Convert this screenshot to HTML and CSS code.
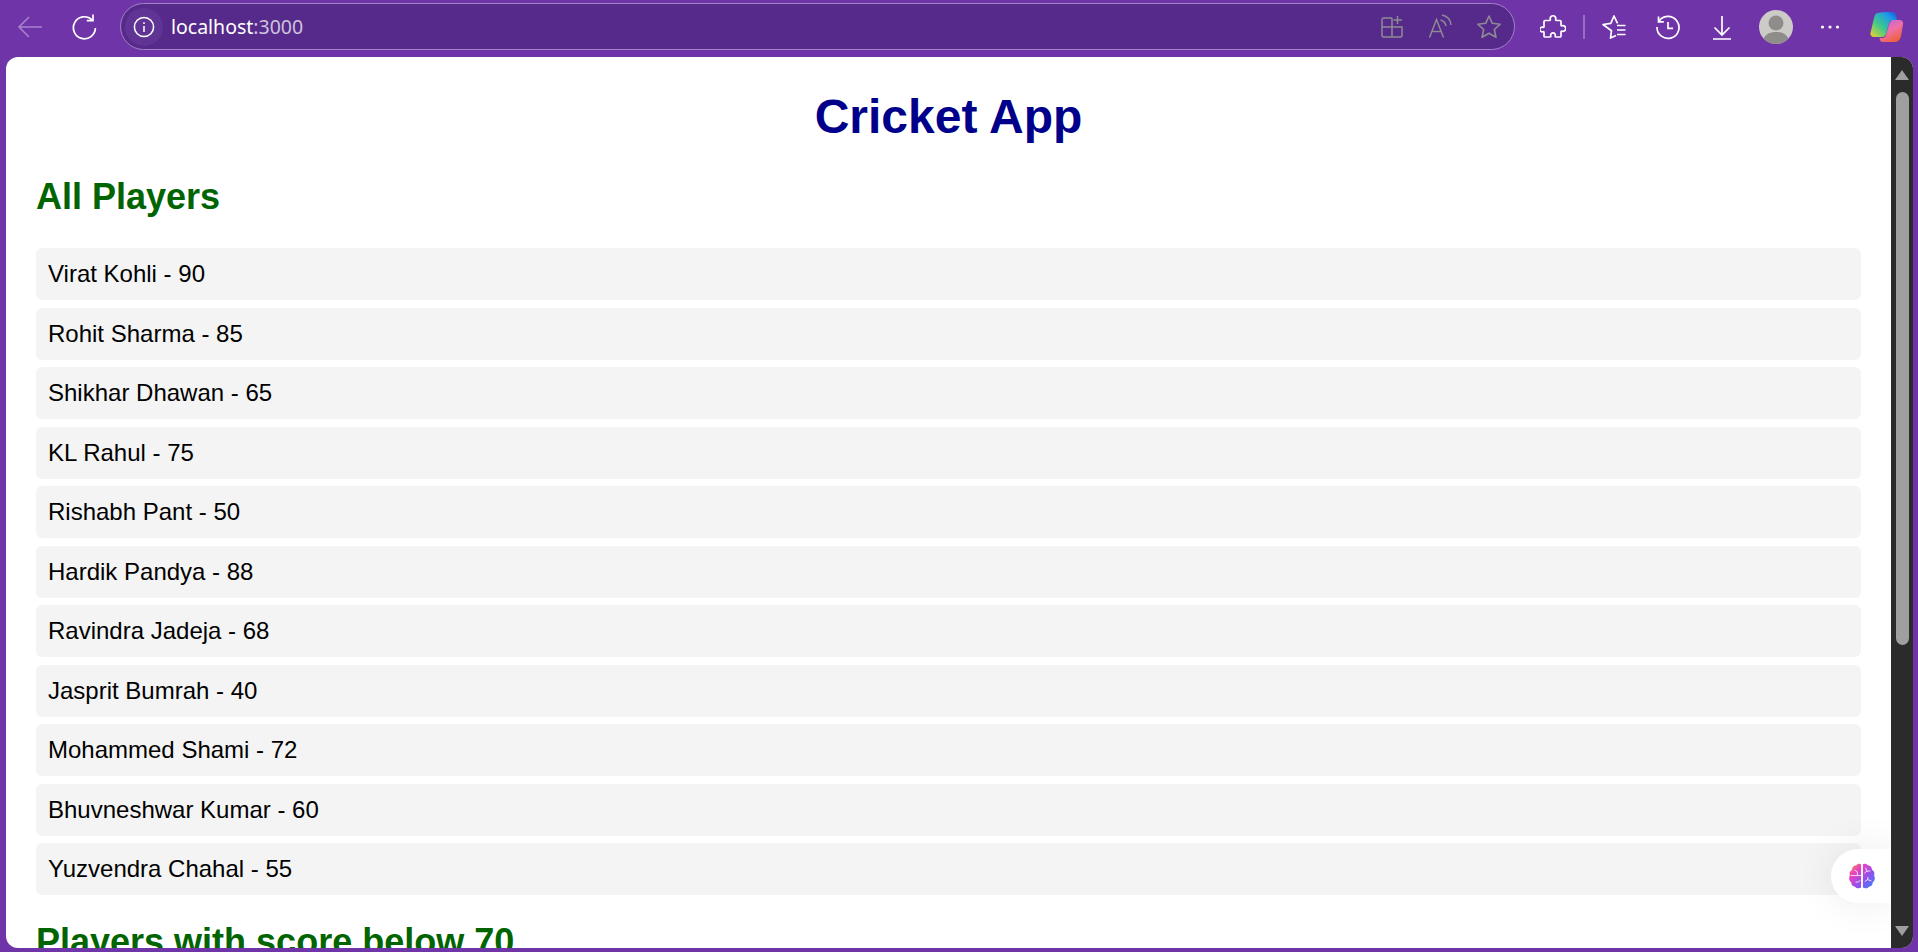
FILE: index.html
```html
<!DOCTYPE html>
<html lang="en">
<head>
    <meta charset="UTF-8">
    <title>Cricket App</title>
    <link rel="stylesheet" href="styles.css">
</head>
<body>
    <div class="window">
        <!-- Browser toolbar -->
        <div class="toolbar">
            <div class="nav-btn">
                <svg width="28" height="28" viewBox="0 0 28 28" fill="none" stroke="#a681cf" stroke-width="1.6"><path d="M26 14H3M13 4 3 14l10 10"/></svg>
            </div>
            <div class="nav-btn">
                <svg width="28" height="28" viewBox="0 0 28 28" fill="none" stroke="#fff" stroke-width="1.7"><path d="M22 6.800A11 11 0 1 0 25.400 15"/><path d="M23 1.500v6.200h-6.200"/></svg>
            </div>
            <div class="address-bar">
                <div class="site-info">
                    <svg width="22" height="22" viewBox="0 0 22 22" fill="none" stroke="#fff" stroke-width="1.5"><circle cx="11" cy="11" r="9.600"/><path d="M11 10v6M11 6.200v1.800"/></svg>
                </div>
                <div class="url"><span class="host">localhost</span>:3000</div>
                <div class="address-icons">
                    <svg width="24" height="24" viewBox="0 0 24 24" fill="none" stroke="#8f8a94" stroke-width="1.5"><path d="M12 3H3.500A1.500 1.500 0 0 0 2 4.500V20.500A1.500 1.500 0 0 0 3.500 22H20.500A1.500 1.500 0 0 0 22 20.500V12H2M12 3V22M17.500 1V9M13.500 5H22"/></svg>
                    <svg width="24" height="26" viewBox="0 0 24 26" fill="none" stroke="#8f8a94" stroke-width="1.5"><path d="M1.500 23.500 8.500 5.500l7 18M4 17.500h9"/><path d="M12.500 6c3 .8 5 3 5.600 6M14 1c5 1 8.500 5 9 10"/></svg>
                    <svg width="26" height="26" viewBox="0 0 26 26" fill="none" stroke="#8f8a94" stroke-width="1.6"><path d="m13 2 3.300 7.300 7.900.9-5.900 5.300 1.700 7.800-7-4-7 4 1.700-7.800-5.900-5.300 7.900-.9z" stroke-linejoin="round"/></svg>
                </div>
            </div>
            <div class="toolbar-right">
                <div class="tool-btn">
                    <svg width="26" height="26" viewBox="0 0 26 26" fill="none" stroke="#fff" stroke-width="1.700" stroke-linejoin="round"><path d="M5 6.500h4.500c.8 0 1-.6.8-1.200a2.800 2.800 0 1 1 5.400 0c-.2.6 0 1.200.8 1.200H20a1 1 0 0 1 1 1V11c0 .8.6 1 1.200.8a2.800 2.800 0 1 1 0 5.400c-.6-.2-1.200 0-1.200.8V22a1 1 0 0 1-1 1h-4c-.8 0-1-.6-.8-1.200a2.300 2.300 0 1 0-4.400 0c.2.6 0 1.200-.8 1.200H5a1 1 0 0 1-1-1v-3.500c0-.8-.6-1-1.200-.8a2.300 2.300 0 1 1 0-4.400c.6.2 1.200 0 1.200-.8V7.500a1 1 0 0 1 1-1z"/></svg>
                </div>
                <div class="separator"></div>
                <div class="tool-btn">
                    <svg width="26" height="26" viewBox="0 0 26 26" fill="none" stroke="#fff" stroke-width="1.700" stroke-linejoin="round"><path d="M15 21.500 9.500 24l1-7.300L2 10.500l7.800-1.200L13 2l3.500 7.300"/><path d="M16 11.500h8.500M16 16h8.500M16 20.500h8.500"/></svg>
                </div>
                <div class="tool-btn">
                    <svg width="26" height="26" viewBox="0 0 26 26" fill="none" stroke="#fff" stroke-width="1.700"><path d="M3.700 7.500A11 11 0 1 1 2 13"/><path d="M3.500 2.500v5.300h5.300M13 8v6.300h5"/></svg>
                </div>
                <div class="tool-btn">
                    <svg width="24" height="26" viewBox="0 0 24 26" fill="none" stroke="#fff" stroke-width="1.700"><path d="M12 2v19M4.500 13.500 12 21l7.500-7.500M3 25h18"/></svg>
                </div>
                <div class="tool-btn">
                    <svg width="34" height="34" viewBox="0 0 34 34"><circle cx="17" cy="17" r="17" fill="#cdcbc8"/><circle cx="17" cy="13" r="7.500" fill="#8f8d8a"/><path d="M4.500 28.500C7 24 11 22 17 22s10 2 12.500 6.500A17 17 0 0 1 17 34 17 17 0 0 1 4.500 28.500z" fill="#8f8d8a"/></svg>
                </div>
                <div class="tool-btn">
                    <svg width="20" height="6" viewBox="0 0 20 6" fill="#fff"><circle cx="2.500" cy="3" r="1.600"/><circle cx="10" cy="3" r="1.600"/><circle cx="17.500" cy="3" r="1.600"/></svg>
                </div>
                <div class="tool-btn copilot">
                    <svg width="34" height="32" viewBox="0 0 34 32">
                        <defs>
                            <linearGradient id="copA" x1="0" y1="1" x2="1" y2="0"><stop offset="0" stop-color="#f5d327"/><stop offset=".4" stop-color="#3fc98a"/><stop offset=".75" stop-color="#1f9be8"/><stop offset="1" stop-color="#1452d8"/></linearGradient>
                            <linearGradient id="copB" x1="0" y1="0" x2=".6" y2="1"><stop offset="0" stop-color="#a56ae8"/><stop offset=".55" stop-color="#f06fa6"/><stop offset="1" stop-color="#f0603c"/></linearGradient>
                        </defs>
                        <path d="M23 9h6c3 0 4.500 2 4 4.500L31 25c-.5 3-3 6-6 6H13c-2 0-3-1-3.500-4H12c2 0 3.500-1 4-3l3-11c.7-2 2-4 4-4z" fill="url(#copB)"/>
                        <path d="M8 2c2-1 12-1 14-1 2 0 3.500 1 4 3l1 5h-4c-2 0-3.500 1-4 3l-3 11c-.7 2-2 3-4 3H4c-2.500 0-4-2-3.500-4L4 7c.5-3 2-5 4-5z" fill="url(#copA)"/>
                    </svg>
                </div>
            </div>
        </div>

        <div class="viewport">
            <div class="page">
                <h1 class="title">Cricket App</h1>

                <h2 class="section-title">All Players</h2>
                <ul class="player-list">
                    <li class="player">Virat Kohli - 90</li>
                    <li class="player">Rohit Sharma - 85</li>
                    <li class="player">Shikhar Dhawan - 65</li>
                    <li class="player">KL Rahul - 75</li>
                    <li class="player">Rishabh Pant - 50</li>
                    <li class="player">Hardik Pandya - 88</li>
                    <li class="player">Ravindra Jadeja - 68</li>
                    <li class="player">Jasprit Bumrah - 40</li>
                    <li class="player">Mohammed Shami - 72</li>
                    <li class="player">Bhuvneshwar Kumar - 60</li>
                    <li class="player">Yuzvendra Chahal - 55</li>
                </ul>

                <h2 class="section-title">Players with score below 70</h2>
            </div>

            <!-- Floating extension button -->
            <div class="float-btn">
                <svg width="28" height="26" viewBox="0 0 30 28">
                    <defs>
                        <linearGradient id="brainGrad" x1="0" y1="0" x2="1" y2="1"><stop offset="0" stop-color="#f59a2e"/><stop offset=".3" stop-color="#e83fc4"/><stop offset=".65" stop-color="#8a52ee"/><stop offset="1" stop-color="#2f8bff"/></linearGradient>
                    </defs>
                    <path d="M14 1.500V26.500C12 27.500 9 27.500 7.500 25.500 5 25.500 3.500 23.500 3.500 21 1 19.500.5 15.500 2 13.500 1 11 2 8.500 4 7.500 4.500 4 7 2.500 9 2.500 10.500.5 13 .5 14 1.500zM16 1.500V26.500C18 27.500 21 27.500 22.500 25.500 25 25.500 26.500 23.500 26.500 21 29 19.500 29.500 15.500 28 13.500 29 11 28 8.500 26 7.500 25.500 4 23 2.500 21 2.500 19.500.5 17 .5 16 1.500z" fill="url(#brainGrad)"/>
                    <path d="M3 13.500H14M7 7.500 10 9.500V13M8 20.500H11L13 18.500M19 5 20 9 24 8.500M20 9 17.500 11M18 20 21 18 25 19M21 18 21.500 15" fill="none" stroke="#f3e6ff" stroke-width="1"/>
                </svg>
            </div>

            <div class="scrollbar">
                <div class="arrow-up"></div>
                <div class="thumb"></div>
                <div class="arrow-down"></div>
            </div>
        </div>
    </div>
</body>
</html>
```

FILE: styles.css
```css
* {
    box-sizing: border-box;
}
html, body {
    margin: 0;
    height: 100%;
    overflow: hidden;
}
body {
    font-family: "Liberation Sans", Arial, sans-serif;
    background-color: #6f35a8;
}
.window {
    height: 952px;
    display: flex;
    flex-direction: column;
}

/* Toolbar */
.toolbar {
    height: 57px;
    flex-shrink: 0;
    display: flex;
    align-items: flex-start;
    padding: 3px 4px 0 3px;
}
.nav-btn {
    width: 54px;
    height: 47px;
    display: flex;
    align-items: center;
    justify-content: center;
}
.address-bar {
    width: 1396px;
    height: 47px;
    margin-left: 9px;
    padding: 0 12px 0 4px;
    display: flex;
    align-items: center;
    background-color: #552a8a;
    border: 1px solid #a283c6;
    border-radius: 24px;
}
.site-info {
    width: 38px;
    height: 38px;
    margin-right: 8px;
    border-radius: 50%;
    background-color: #5f3494;
    display: flex;
    align-items: center;
    justify-content: center;
}
.url {
    flex: 1;
    font-family: "Noto Sans", "Open Sans", sans-serif;
    font-size: 19.5px;
    color: #cfc3dd;
}
.url .host {
    color: #fff;
}
.address-icons {
    display: flex;
    align-items: center;
    gap: 24px;
}
.toolbar-right {
    display: flex;
    align-items: center;
    height: 47px;
    margin-left: 11px;
}
.tool-btn {
    width: 54px;
    height: 47px;
    display: flex;
    align-items: center;
    justify-content: center;
}
.copilot {
    margin-left: 3px;
}
.separator {
    width: 2px;
    height: 24px;
    margin: 0 2px 0 3px;
    background-color: #9670c2;
}

/* Page area */
.viewport {
    position: relative;
    flex: 1;
    margin: 0 5px 4px 6px;
    display: flex;
    background-color: #fff;
    border-radius: 12px;
    overflow: hidden;
}
.page {
    flex: 1;
    min-width: 0;
    padding: 0 30px;
    overflow: hidden;
}
.title {
    margin: 29px 0 0;
    font-size: 48px;
    line-height: 62px;
    text-align: center;
    color: darkblue;
}
.section-title {
    margin: 28px 0 0;
    font-size: 36px;
    line-height: 42px;
    color: darkgreen;
}
.player-list {
    list-style: none;
    margin: 30.4px 0 0;
    padding: 0;
}
.player {
    height: 52px;
    margin-bottom: 7.5px;
    padding: 0 12px;
    display: flex;
    align-items: center;
    font-size: 24px;
    color: #000;
    background-color: #f4f4f4;
    border-radius: 6px;
}
.player-list + .section-title {
    margin-top: 26px;
}

/* Scrollbar */
.scrollbar {
    position: relative;
    width: 22px;
    flex-shrink: 0;
    background-color: #2b2b2b;
}
.arrow-up, .arrow-down {
    position: absolute;
    left: 4px;
    width: 0;
    height: 0;
    border-left: 7px solid transparent;
    border-right: 7px solid transparent;
}
.arrow-up {
    top: 13px;
    border-bottom: 10px solid #9f9f9f;
}
.arrow-down {
    bottom: 12px;
    border-top: 10px solid #9f9f9f;
}
.thumb {
    position: absolute;
    top: 35px;
    left: 5px;
    width: 13px;
    height: 553px;
    background-color: #9f9f9f;
    border-radius: 7px;
}

/* Floating button */
.float-btn {
    position: absolute;
    right: 22px;
    top: 792px;
    width: 60px;
    height: 54px;
    padding-left: 17px;
    display: flex;
    align-items: center;
    background-color: #fff;
    border-radius: 27px 0 0 27px;
    box-shadow: 0 0 40px rgba(0, 0, 0, 0.08);
}
```
